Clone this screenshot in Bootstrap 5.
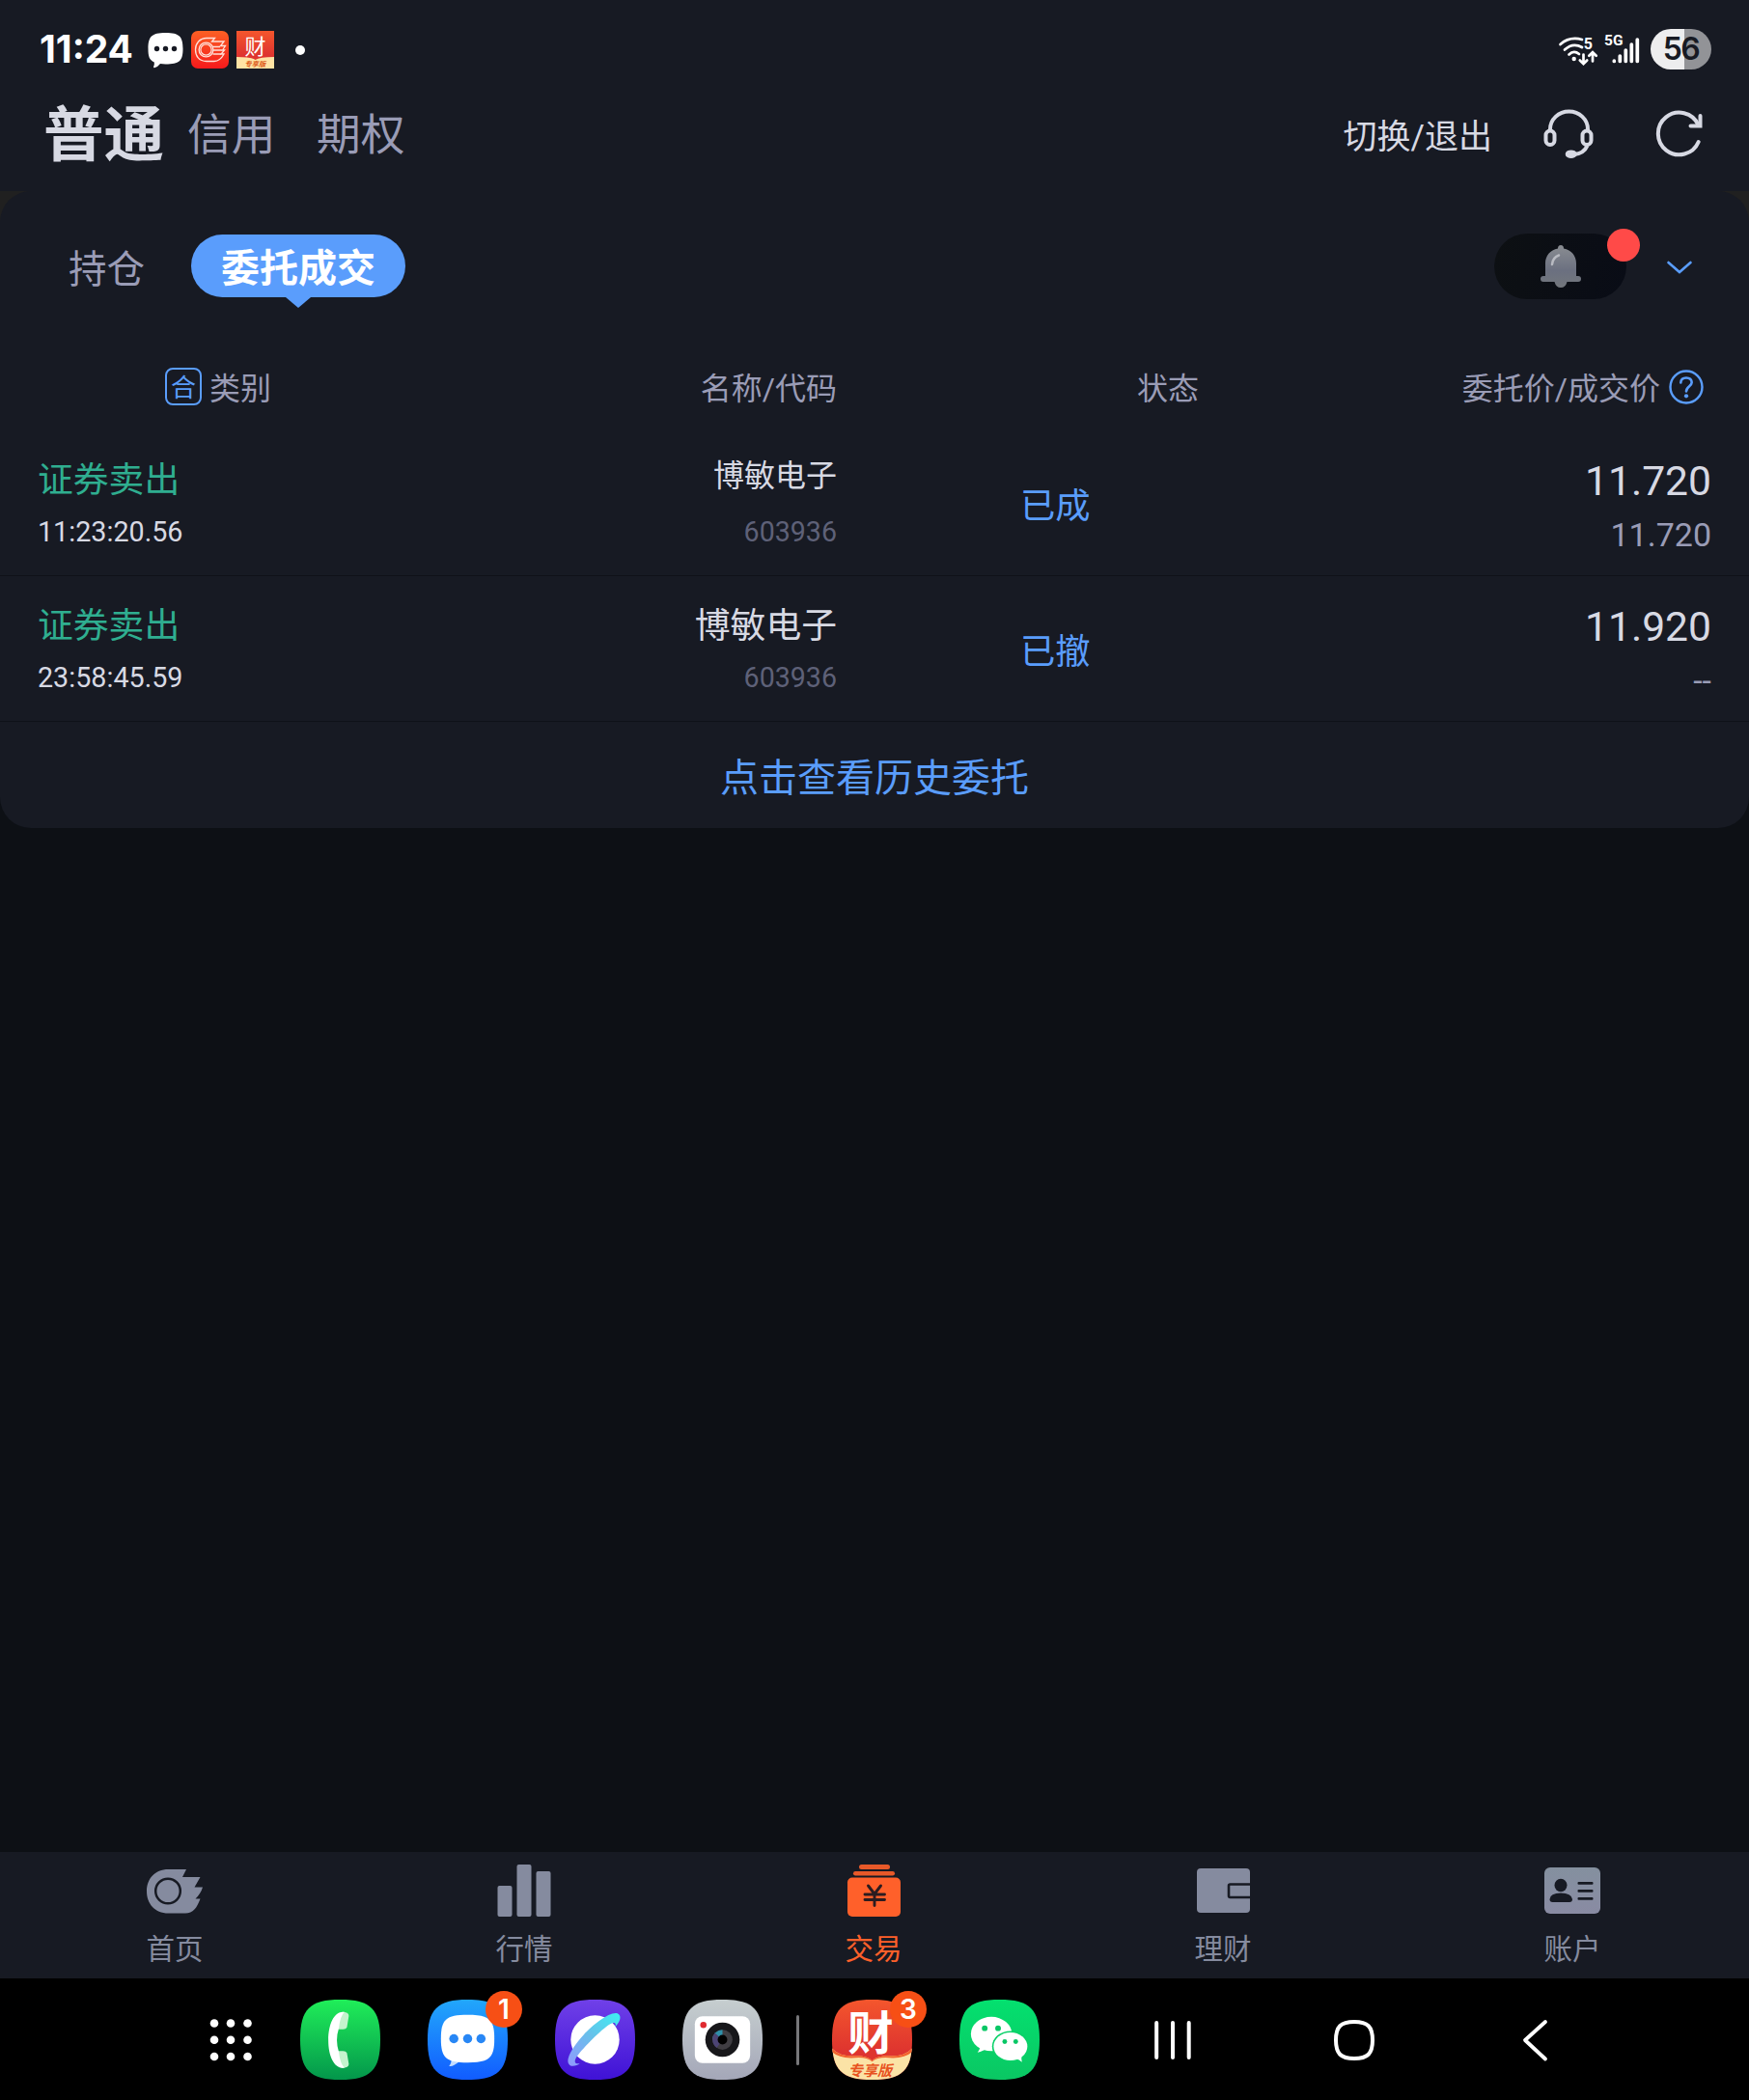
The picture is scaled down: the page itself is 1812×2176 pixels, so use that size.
<!DOCTYPE html>
<html lang="zh-CN">
  <head>
    <meta charset="UTF-8" />
    <meta name="viewport" content="width=device-width, initial-scale=1" />
    <title>交易 - 委托成交</title>
    <link
      href="https://cdn.jsdelivr.net/npm/bootstrap@5.3.0/dist/css/bootstrap.min.css"
      rel="stylesheet"
    />
    <style>
      body {
        height: 2176px;
        background: #0d1015;
        color: #d7d9e3;
        font-family: Roboto, "Noto Sans CJK SC", sans-serif;
        line-height: 1;
        overflow: hidden;
      }
      svg {
        display: block;
        flex: none;
        overflow: visible;
      }
      .text-dim {
        color: #9a9cb6;
      }
      .text-blue {
        color: #5a9dfc;
      }
      .text-sell {
        color: #2fae90;
      }

      /* 状态栏 */
      .status-bar {
        height: 80px;
        padding: 20px 39px 0 41px;
        background: #171a23;
      }
      .clock {
        width: 104px;
        font: 700 39px/1 Inter, sans-serif;
        padding-top: 11px;
        color: #fff;
      }
      .clock-icons {
        gap: 8px;
        height: 63px;
        margin-left: 8px;
      }
      .more-dot {
        margin-left: 14px;
      }
      .signal-group {
        height: 61px;
      }
      .signal-bars {
        margin: 0 12px 0 7px;
      }
      .battery {
        width: 63px;
        height: 42px;
        border-radius: 21px;
        background: linear-gradient(90deg, #ededee 35px, #929397 35px);
        color: #171a23;
        font: 600 32px/42px Inter, sans-serif;
        letter-spacing: -1.5px;
      }

      /* 账户切换 */
      .account-bar {
        height: 118px;
        padding: 0 47px 0 45px;
        background: #171a23;
      }
      .account-bar .acc-text {
        padding-top: 4px;
      }
      .acc-main {
        font-size: 62.5px;
        font-weight: 700;
        width: 149px;
      }
      .acc-sub {
        font-size: 45.7px;
        width: 134px;
      }
      .account-bar .acc-switch {
        font-size: 35px;
        padding-top: 6px;
        margin-right: 51px;
      }
      .headset-icon {
        margin-right: 60px;
      }

      /* 委托面板 */
      .panel-back {
        background: linear-gradient(#202020 60px, #0d1015 60px);
      }
      .order-panel {
        height: 660px;
        border-radius: 32px;
        background: #171a23;
      }
      .panel-tabs {
        height: 155px;
        padding: 45px 59px 0 71px;
      }
      .tab-plain {
        font-size: 39.5px;
        line-height: 73px;
        width: 127px;
      }
      .tab-pill {
        width: 222px;
        height: 65px;
        border-radius: 33px;
        background: #5a9dfc;
        color: #fff;
        font-size: 40px;
        font-weight: 700;
        line-height: 72px;
      }
      .tab-pill::after {
        content: "";
        position: absolute;
        left: 98px;
        top: 65px;
        border: 13px solid transparent;
        border-top: 11px solid #5a9dfc;
        border-bottom: 0;
      }
      .bell-pill {
        width: 137px;
        height: 68px;
        margin: -1px 42px 0 0;
        padding-top: 12px;
        border-radius: 34px;
        background: linear-gradient(100deg, #0d1013, #090c16);
      }
      .red-dot {
        position: absolute;
        left: 117px;
        top: -5px;
        width: 34px;
        height: 34px;
        border-radius: 50%;
        background: #ff4a48;
      }
      .more-arrow {
        margin-top: 27px;
      }

      .order-grid {
        display: grid;
        grid-template-columns: 400px 428px 375px 1fr;
        padding: 0 39px;
      }
      .order-head {
        height: 93px;
        font-size: 32px;
        line-height: 100px;
      }
      .merge-box {
        width: 38px;
        height: 39px;
        border: 2px solid #5a9dfc;
        border-radius: 8px;
        font-size: 26px;
        line-height: 38px;
        margin: 28px 8px 0 132px;
      }
      .help-icon {
        margin: 30px 8px 0 9px;
      }
      .order-row {
        height: 151px;
        border-bottom: 1px solid #0f1118;
        padding-top: 25px;
      }
      .order-row .f-type {
        font-size: 36.8px;
        line-height: 54px;
      }
      .order-row .f-time {
        font-size: 28.7px;
        line-height: 53px;
      }
      .order-row .f-name-s {
        font-size: 32px;
        line-height: 44px;
        margin-bottom: 10px;
      }
      .order-row .f-code {
        font-size: 28.6px;
        line-height: 53px;
        color: #5e6178;
      }
      .order-row .f-status {
        font-size: 36.3px;
        padding: 36px 0 0 190px;
      }
      .order-row .f-price {
        font-size: 42.6px;
        line-height: 55px;
      }
      .order-row .f-deal {
        font-size: 34px;
        line-height: 57px;
      }
      .history-link {
        font-size: 40px;
        line-height: 117px;
      }

      /* 底部导航 */
      .tab-bar {
        height: 131px;
        padding-right: 2px;
        background: #171a23;
      }
      .tab-item {
        flex: 1;
        color: #858b9f;
        font-size: 29.5px;
        padding-top: 10px;
      }
      .tab-item.active {
        color: #ff602a;
      }
      .tab-item span {
        line-height: 30px;
        margin-top: 18px;
      }

      /* 系统任务栏 */
      .dock {
        height: 126px;
        padding: 1px 0 0 217px;
        background: #000;
      }
      .dock-grid {
        margin-right: 50px;
      }
      .dock-app {
        width: 83px;
        margin-right: 49px;
      }
      .dock-app.last-pinned {
        margin-right: 35px;
      }
      .dock-line {
        width: 3px;
        height: 52px;
        margin-right: 34px;
        border-radius: 2px;
        background: #77777a;
      }
      .dock-count {
        position: absolute;
        right: -15px;
        top: -9px;
        width: 38px;
        height: 38px;
        border-radius: 50%;
        background: #f74f15;
        color: #fff;
        font: 600 28px/38px Inter, sans-serif;
        text-align: center;
      }
      .nav-keys {
        gap: 148px;
        margin-left: 70px;
      }
    </style>
  </head>
  <body class="d-flex flex-column">
    <!-- 公用图形 -->
    <svg width="0" height="0" class="position-absolute">
      <defs>
        <linearGradient id="gRed" x1="0" y1="0" x2="0" y2="1">
          <stop offset="0" stop-color="#fb6024" />
          <stop offset="1" stop-color="#f51a1c" />
        </linearGradient>
        <linearGradient id="gCai" x1="0" y1="0" x2="0" y2="1">
          <stop offset="0" stop-color="#f4562d" />
          <stop offset=".65" stop-color="#de342f" />
        </linearGradient>
        <linearGradient id="gGreen" x1="0" y1="0" x2="0" y2="1">
          <stop offset="0" stop-color="#20ee59" />
          <stop offset="1" stop-color="#03964b" />
        </linearGradient>
        <linearGradient id="gBlue" x1="0" y1="0" x2="0" y2="1">
          <stop offset="0" stop-color="#22a7fb" />
          <stop offset="1" stop-color="#115cff" />
        </linearGradient>
        <linearGradient id="gPurple" x1="0" y1="0" x2="0" y2="1">
          <stop offset="0" stop-color="#7040e8" />
          <stop offset="1" stop-color="#3f12d6" />
        </linearGradient>
        <linearGradient id="gRing" x1="1" y1="0" x2="0" y2="1">
          <stop offset="0" stop-color="#3cf0f2" />
          <stop offset=".5" stop-color="#68c0ea" />
          <stop offset="1" stop-color="#9198ff" />
        </linearGradient>
        <linearGradient id="gSilver" x1="0" y1="0" x2="0" y2="1">
          <stop offset="0" stop-color="#c6cecf" />
          <stop offset="1" stop-color="#a4a7b8" />
        </linearGradient>
        <linearGradient id="gWechat" x1="0" y1="0" x2="0" y2="1">
          <stop offset="0" stop-color="#04e06f" />
          <stop offset="1" stop-color="#0ac763" />
        </linearGradient>
        <linearGradient id="gBell" x1="0" y1="0" x2="0" y2="1">
          <stop offset="0" stop-color="#8a8d92" />
          <stop offset=".6" stop-color="#6b7080" />
          <stop offset="1" stop-color="#73777c" />
        </linearGradient>
        <linearGradient id="gCard" x1="0" y1="0" x2="0" y2="1">
          <stop offset="0" stop-color="#84909f" />
          <stop offset="1" stop-color="#898ba3" />
        </linearGradient>
        <path
          id="squircle"
          d="M42 0C74 0 84 10 84 42S74 84 42 84 0 74 0 42 10 0 42 0Z"
        />
        <clipPath id="clipApp"><use href="#squircle" /></clipPath>
      </defs>
    </svg>

    <!-- 状态栏 -->
    <div class="status-bar d-flex align-items-start">
      <div class="clock">11:24</div>
      <div class="clock-icons d-flex align-items-center">
        <svg width="37" height="38" viewBox="0 0 37 38">
          <path
            fill="#fff"
            d="M18.500 1C33 1 36.500 5 36.500 17.500S33 33.500 18.500 33.500q-3 0-5.500-.4-2.500 3.400-6 4.200-1.500 0-.8-1.500.9-1.800.6-4.300C1.500 29 .500 25 .500 17.500.500 5 4 1 18.500 1Z"
          />
          <g fill="#171a23">
            <circle cx="9.500" cy="17.500" r="2.700" />
            <circle cx="18.500" cy="17.500" r="2.700" />
            <circle cx="27.500" cy="17.500" r="2.700" />
          </g>
        </svg>
        <svg width="39" height="39" viewBox="0 0 39 39">
          <rect width="39" height="39" rx="7" fill="url(#gRed)" />
          <g fill="none" stroke="#ffe0d8" stroke-width="1.300">
            <path
              d="M16 7.500H24.500L21.500 11H34L30.500 15.500H35.500L32.500 20H34.500L31 24H34C31 29.500 28 31.500 24 31.500H16C8 31.500 4.500 26 4.500 19.500S9 7.500 16 7.500Z"
            />
            <circle cx="15.500" cy="19.500" r="7.400" />
            <circle cx="15.500" cy="19.500" r="5.600" />
            <path d="M22 16.500H30M23 20H32M22.500 24H31" />
          </g>
        </svg>
        <svg width="39" height="39" viewBox="0 0 39 39">
          <rect width="39" height="39" fill="url(#gCai)" />
          <path d="M0 27q15 0 19.500 3Q24 27 39 27V39H0Z" fill="#ffe3a4" />
          <text x="8.500" y="24" font-size="22" fill="#fff">财</text>
          <text x="8.500" y="36.800" font-size="7.200" font-weight="700" font-style="italic" fill="#dd5a18">专享版</text>
        </svg>
        <svg class="more-dot" width="10" height="10" viewBox="0 0 10 10">
          <circle cx="5" cy="5" r="5" fill="#fff" />
        </svg>
      </div>
      <div class="signal-group d-flex align-items-center ms-auto">
        <svg width="40" height="31" viewBox="0 0 40 31" class="mt-1">
          <g fill="none" stroke="#fff" stroke-width="2.700" stroke-linecap="round">
            <path d="M1.500 9Q11 .500 24 4" />
            <path d="M6 14.500Q14.500 6.500 24 12" />
            <path d="M10.500 19.500Q15.500 14.500 21 19" />
            <path d="M25.500 19.500V28.500M21.800 25.500L25.500 29.200 29.200 25.500" />
            <path d="M35 26.500V17.500M31.300 20.800L35 17.100 38.700 20.800" />
          </g>
          <circle cx="15.700" cy="24" r="2.200" fill="#fff" />
          <text x="25.800" y="14" font-size="16" font-weight="700" fill="#fff">5</text>
        </svg>
        <svg class="signal-bars" width="36" height="31" viewBox="0 0 36 31">
          <text x="0" y="11.500" font-size="15.500" font-weight="700" fill="#fff">5G</text>
          <path
            d="M10.300 28.200V28.500M16.300 23V28.500M22.300 17V28.500M28.300 11V28.500M34.300 6V28.500"
            stroke="#fff"
            stroke-width="3.700"
            stroke-linecap="round"
          />
        </svg>
        <div class="battery text-center">56</div>
      </div>
    </div>

    <!-- 账户类型 -->
    <div class="account-bar d-flex align-items-center">
      <div class="acc-main acc-text">普通</div>
      <div class="acc-sub acc-text text-dim">信用</div>
      <div class="acc-sub acc-text text-dim">期权</div>
      <div class="acc-switch acc-text ms-auto">切换/退出</div>
      <svg class="headset-icon" width="56" height="56" viewBox="0 0 56 56" fill="none" stroke="#d7d9e3" stroke-width="4">
        <path d="M9 24V23A19.500 18.500 0 0 1 48 23V24" />
        <rect x="4.500" y="24.500" width="9" height="14.500" rx="4.500" />
        <rect x="42.500" y="24.500" width="9" height="14.500" rx="4.500" />
        <path d="M47.500 40Q44 48 34 49" />
        <ellipse cx="30.700" cy="48.700" rx="4" ry="2.300" fill="#d7d9e3" />
      </svg>
      <svg width="52" height="52" viewBox="0 0 52 52" fill="none" stroke="#d7d9e3" stroke-width="4" stroke-linecap="round">
        <path d="M46.500 16.500A21.800 21.800 0 1 0 46.700 34" />
        <path d="M48.500 7V17.600H38.500" />
      </svg>
    </div>

    <!-- 委托成交 -->
    <div class="panel-back">
      <div class="order-panel">
        <div class="panel-tabs d-flex align-items-start">
          <div class="tab-plain text-dim">持仓</div>
          <div class="tab-pill text-center position-relative">委托成交</div>
          <div class="bell-pill position-relative ms-auto d-flex justify-content-center">
            <svg width="42" height="44" viewBox="0 0 42 44">
              <path
                fill="url(#gBell)"
                d="M21 0C23 0 24 1.500 24 3.500 32 5 37 11 37 19V32H39Q42 32 42 35T39 38H27.500Q26 44 21 44T14.500 38H3Q0 38 0 35T3 32H5V19C5 11 10 5 18 3.500 18 1.500 19 0 21 0Z"
              />
              <path d="M12 20Q12.500 13 19 10.500" stroke="#b9bbc2" stroke-width="2.500" stroke-linecap="round" fill="none" />
            </svg>
            <span class="red-dot"></span>
          </div>
          <svg class="more-arrow" width="26" height="14" viewBox="0 0 26 14">
            <path d="M1.500 2L13 12 24.500 2" fill="none" stroke="#5a9dfc" stroke-width="2.600" stroke-linecap="round" />
          </svg>
        </div>

        <div class="order-grid order-head text-dim">
          <div class="d-flex">
            <span class="merge-box text-blue d-flex justify-content-center">合</span>类别
          </div>
          <div class="text-end">名称/代码</div>
          <div class="text-end">状态</div>
          <div class="d-flex justify-content-end">
            委托价/成交价
            <svg class="help-icon" width="36" height="36" viewBox="0 0 36 36" fill="none" stroke="#5a9dfc">
              <circle cx="18" cy="18" r="16.500" stroke-width="2.400" />
              <path d="M12.300 13.500Q12.500 8.500 18 8.500T23.700 13.300C23.700 17 18 17.500 18 22.500" stroke-width="2.600" stroke-linecap="round" />
              <circle cx="18" cy="27.300" r="2.100" fill="#5a9dfc" stroke="none" />
            </svg>
          </div>
        </div>

        <div class="order-grid order-row">
          <div>
            <div class="f-type text-sell">证券卖出</div>
            <div class="f-time">11:23:20.56</div>
          </div>
          <div class="text-end">
            <div class="f-name-s">博敏电子</div>
            <div class="f-code">603936</div>
          </div>
          <div class="f-status text-blue">已成</div>
          <div class="text-end">
            <div class="f-price">11.720</div>
            <div class="f-deal text-dim">11.720</div>
          </div>
        </div>
        <div class="order-grid order-row">
          <div>
            <div class="f-type text-sell">证券卖出</div>
            <div class="f-time">23:58:45.59</div>
          </div>
          <div class="text-end">
            <div class="f-type">博敏电子</div>
            <div class="f-code">603936</div>
          </div>
          <div class="f-status text-blue">已撤</div>
          <div class="text-end">
            <div class="f-price">11.920</div>
            <div class="f-deal text-dim">--</div>
          </div>
        </div>
        <div class="history-link text-blue text-center">点击查看历史委托</div>
      </div>
    </div>

    <!-- 底部导航 -->
    <nav class="tab-bar d-flex mt-auto">
      <div class="tab-item d-flex flex-column align-items-center">
        <svg width="58" height="58" viewBox="0 -8 58 58" fill="currentColor">
          <path
            d="M22.500 0H41L37 8H55.500L49.500 18.500H58Q56 25 50.500 30.500H55.500C52 40 48 45.500 40 45.500H22.500C8 45.500 0 35 0 22.700S8 0 22.500 0Z"
          />
          <circle cx="22" cy="22.500" r="12.800" fill="none" stroke="#171a23" stroke-width="2.500" />
        </svg>
        <span>首页</span>
      </div>
      <div class="tab-item d-flex flex-column align-items-center">
        <svg width="56" height="58" viewBox="0 -3 56 58" fill="currentColor">
          <rect x="0.500" y="22" width="15" height="32" rx="2" />
          <rect x="20.500" y="0" width="15" height="54" rx="2" />
          <rect x="40.500" y="7" width="15" height="47" rx="2" />
        </svg>
        <span>行情</span>
      </div>
      <div class="tab-item active d-flex flex-column align-items-center">
        <svg width="55" height="58" viewBox="0 -3 55 58" fill="currentColor">
          <rect x="12" y="0" width="32" height="5" rx="2.500" opacity=".9" />
          <rect x="6" y="7" width="43" height="4.500" rx="2.200" opacity=".9" />
          <rect x="0" y="13.500" width="55" height="40.500" rx="5" />
          <path
            d="M21.500 22L28 30.500 34.500 22M28 30.500V42.500M18 31H38.500M18 36.500H38.500"
            fill="none"
            stroke="#2b1c20"
            stroke-width="2.900"
            stroke-linecap="round"
          />
        </svg>
        <span>交易</span>
      </div>
      <div class="tab-item d-flex flex-column align-items-center">
        <svg width="55" height="58" viewBox="0 -7 55 58" fill="currentColor">
          <rect width="55" height="46" rx="4" />
          <path d="M55 16.500H34.500Q33 16.500 33 18V28.500Q33 30 34.500 30H55" fill="none" stroke="#171a23" stroke-width="2.600" />
        </svg>
        <span>理财</span>
      </div>
      <div class="tab-item d-flex flex-column align-items-center">
        <svg width="58" height="58" viewBox="0 -6 58 58">
          <rect width="58" height="48" rx="6" fill="url(#gCard)" />
          <g fill="#171a23">
            <ellipse cx="17" cy="18.500" rx="6.500" ry="6.700" />
            <path d="M5.500 33Q6 26.500 17 26.500T29 33Q29 36 26 36H8.500Q5.500 36 5.500 33Z" />
            <rect x="34.500" y="15" width="16" height="2.700" rx="1" />
            <rect x="34.500" y="23" width="16" height="2.700" rx="1" />
            <rect x="34.500" y="31" width="16" height="2.700" rx="1" />
          </g>
        </svg>
        <span>账户</span>
      </div>
    </nav>

    <!-- 系统任务栏 -->
    <div class="dock d-flex align-items-center">
      <svg class="dock-grid" width="44" height="44" viewBox="0 0 44 44" fill="#fff">
        <circle cx="5" cy="4.500" r="4.300" /><circle cx="22" cy="4.500" r="4.300" /><circle cx="39.500" cy="4.500" r="4.300" />
        <circle cx="5" cy="21.700" r="4.300" /><circle cx="22" cy="21.700" r="4.300" /><circle cx="39.500" cy="21.700" r="4.300" />
        <circle cx="5" cy="39" r="4.300" /><circle cx="22" cy="39" r="4.300" /><circle cx="39.500" cy="39" r="4.300" />
      </svg>
      <div class="dock-app">
        <svg width="83" height="83" viewBox="0 0 84 84">
          <use href="#squircle" fill="url(#gGreen)" />
          <path d="M44 13Q51 13 51 17L49 29Q48 31 45 31H40V17ZM44 71.500Q51 71.500 51 67.500L49 56Q48 54 45 54H39V67Z" fill="#c4f3cd" />
          <path d="M46.500 13C36 11.500 29.500 25 29.500 42.500S36 73 46.500 71.500Q42 68 40.500 55 36.500 42 40.500 30 42 17 46.500 13Z" fill="#fff" />
        </svg>
      </div>
      <div class="dock-app position-relative">
        <svg width="83" height="83" viewBox="0 0 84 84">
          <use href="#squircle" fill="url(#gBlue)" />
          <path d="M25 60Q25.500 67 22.500 69.500 26 71 33 65Z" fill="#c3dcff" />
          <path d="M42 16C65 16 70 21 70 41S65 66 42 66 14 61 14 41 19 16 42 16Z" fill="#fff" />
          <g fill="#2887f5">
            <circle cx="27.500" cy="41" r="4.800" /><circle cx="42" cy="41" r="4.800" /><circle cx="56" cy="41" r="4.800" />
          </g>
        </svg>
        <span class="dock-count">1</span>
      </div>
      <div class="dock-app">
        <svg width="83" height="83" viewBox="0 0 84 84">
          <use href="#squircle" fill="url(#gPurple)" />
          <circle cx="42" cy="42" r="25.500" fill="#fff" />
          <path
            d="M65.500 14.500C58 12 40 26 30 37 19 49 11 62 14.500 67.500 17 71.500 23 69 26 67 20 68 19 64.500 25 57 32 48 52 28 59 25 63 23 66 26 61 31 68 24 71 17.500 65.500 14.500Z"
            fill="url(#gRing)"
          />
        </svg>
      </div>
      <div class="dock-app last-pinned">
        <svg width="83" height="83" viewBox="0 0 84 84">
          <use href="#squircle" fill="url(#gSilver)" />
          <rect x="13" y="17.500" width="58" height="49" rx="8" fill="#fff" />
          <circle cx="22" cy="26.500" r="3.300" fill="#e02a30" />
          <circle cx="42" cy="42" r="18" fill="#17171a" />
          <circle cx="42" cy="42" r="10.500" fill="#403e43" />
          <path d="M42 31.500A10.500 10.500 0 0 0 31.500 42H42Z" fill="#2f8fa8" />
          <path d="M31.500 42A10.500 10.500 0 0 1 34 35L42 42 36 50.500A10.500 10.500 0 0 1 31.500 42Z" fill="#4c4474" />
          <circle cx="42" cy="42" r="5" fill="#000" />
        </svg>
      </div>
      <div class="dock-line"></div>
      <div class="dock-app position-relative">
        <svg width="83" height="83" viewBox="0 0 84 84">
          <g clip-path="url(#clipApp)">
            <rect width="84" height="84" fill="url(#gCai)" />
            <path d="M0 51Q8 60 25 59 37 59 42 64 47 59 59 59 76 60 84 51V84H0Z" fill="#fbe3a6" />
            <path d="M0 51Q8 60 25 59 37 59 42 64 47 59 59 59 76 60 84 51V55Q76 62 60 61 48 60 42 65 36 60 24 61 8 62 0 55Z" fill="#f2632d" />
          </g>
          <text x="16.500" y="52.500" font-size="48" fill="#fff" font-weight="700">财</text>
          <text x="17" y="79.500" font-size="15.300" font-weight="700" font-style="italic" fill="#e8531f">专享版</text>
        </svg>
        <span class="dock-count">3</span>
      </div>
      <div class="dock-app">
        <svg width="83" height="83" viewBox="0 0 84 84">
          <use href="#squircle" fill="url(#gWechat)" />
          <path d="M22 49Q21 53 19 55.500 25 54 28 51Z" fill="#fff" />
          <ellipse cx="33.500" cy="36" rx="21.500" ry="18" fill="#fff" />
          <ellipse cx="53.500" cy="49" rx="19.300" ry="16.200" fill="#09d168" />
          <ellipse cx="53.500" cy="49" rx="17.700" ry="14.700" fill="#fff" />
          <path d="M59 62Q63 63 65.500 65.500 64.500 62 65.500 58Z" fill="#fff" />
          <g fill="#08c765">
            <circle cx="26.500" cy="30" r="3" /><circle cx="40.500" cy="30" r="3" />
            <circle cx="47.500" cy="44" r="2.500" /><circle cx="59" cy="44" r="2.500" />
          </g>
        </svg>
      </div>
      <div class="nav-keys d-flex align-items-center">
        <svg width="38" height="42" viewBox="0 0 38 42">
          <path d="M2.200 3V39M19 3V39M35.700 3V39" stroke="#fff" stroke-width="4" stroke-linecap="round" />
        </svg>
        <svg width="42" height="42" viewBox="0 0 42 42">
          <path d="M21 2C35 2 40 7 40 21S35 40 21 40 2 35 2 21 7 2 21 2Z" fill="none" stroke="#fff" stroke-width="4" />
        </svg>
        <svg width="36" height="42" viewBox="-5 0 36 42">
          <path d="M24 2L3 21 24 40.500" fill="none" stroke="#fff" stroke-width="3.800" stroke-linecap="round" stroke-linejoin="round" />
        </svg>
      </div>
    </div>
    <script src="https://cdn.jsdelivr.net/npm/bootstrap@5.3.0/dist/js/bootstrap.bundle.min.js"></script>
  </body>
</html>
